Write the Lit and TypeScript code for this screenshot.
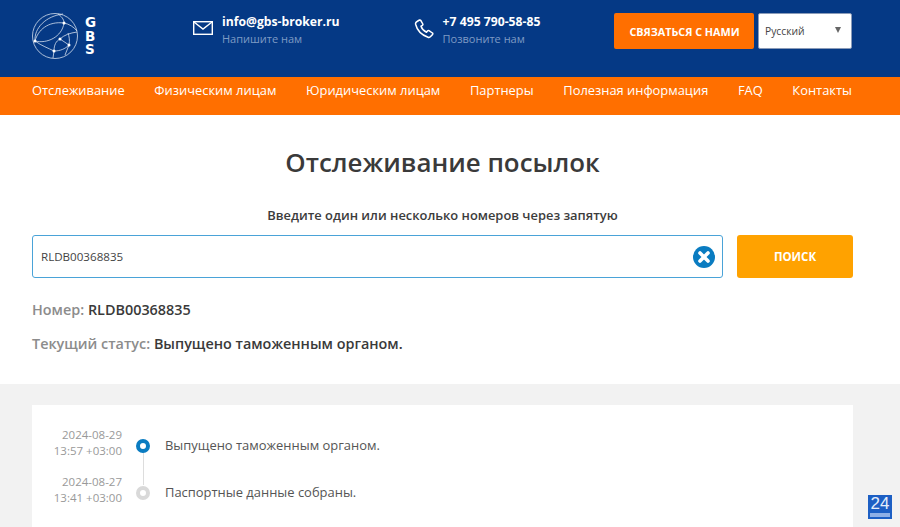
import { LitElement, html, css } from "lit";
import { customElement } from "lit/decorators.js";

@customElement("app-root")
export class AppRoot extends LitElement {
  static styles = css`
    :host { display: block; height: 527px; overflow: hidden; font-family: "Open Sans", sans-serif; color: #3c3c3c; background: #fff; position: relative; }
    .top { height: 77px; background: #053985; box-sizing: border-box; padding: 13px 48px 0 32px; display: flex; align-items: flex-start; }
    .logo { width: 47px; height: 48px; display: block; }
    .gbs { width: 19px; padding-left: 6px; box-sizing: border-box; margin-top: 3px; color: #fff; font-family: "DejaVu Sans", sans-serif; font-size: 13.5px; font-weight: 700; line-height: 13.5px; word-spacing: 10px; }
    .contact { display: flex; align-items: flex-start; color: #fff; }
    .mail { margin-left: 95px; }
    .phone { margin-left: 74.5px; }
    .contact svg { display: block; margin-top: 8px; margin-right: 9px; }
    .phone svg { margin-right: 8.5px; margin-top: 6px;}
    .c1 { font-size: 12.2px; font-weight: 700; line-height: 18px; }
    .c2 { font-size: 11px; line-height: 16px; color: #7e9bc4; margin-top: 0; }
    .contact-btn { margin-left: auto; width: 140px; height: 36px; background: #ff6f00; border-radius: 2px; color: #fff; font-size: 10.8px; font-weight: 700; display: flex; align-items: center; justify-content: center; margin-right: 4px; padding-left: 1px; box-sizing: border-box; }
    .lang { width: 94px; height: 36px; box-sizing: border-box; background: #fff; border: 1px solid #8a9bb8; border-radius: 2px; font-size: 10.3px; color: #444; display: flex; align-items: center; justify-content: space-between; padding: 0 10px 0 6px; }
    .arrow { width: 0; height: 0; border-left: 3.5px solid transparent; border-right: 3.5px solid transparent; border-top: 6px solid #666; margin-top: -2px; }
    nav { height: 38px; background: #ff6f00; display: flex; justify-content: space-between; align-items: center; padding: 0 48px 12px 32px; box-sizing: border-box; color: #fff; font-size: 12.9px; }
    .main { height: 269px; box-sizing: border-box; padding: 31px 47px 0 32px; }
    h1 { margin: 0; font-size: 25.9px; font-weight: 600; line-height: 32px; text-align: center; color: #3a3a3a; }
    .hint { margin-top: 27px; text-align: center; font-size: 12.9px; font-weight: 600; line-height: 20px; color: #3c3c3c; }
    .row { display: flex; margin-top: 10px; gap: 14px; }
    .input { flex: 1; height: 43px; box-sizing: border-box; border: 1px solid #4aa3d8; border-radius: 3px; display: flex; align-items: center; justify-content: space-between; padding: 0 6px 0 8px; font-size: 11.6px; color: #444; }
    .search { width: 116px; height: 43px; background: #ffa200; border-radius: 3px; color: #fff; font-size: 11.5px; font-weight: 700; display: flex; align-items: center; justify-content: center; }
    .line { font-size: 14.4px; font-weight: 600; line-height: 20px; color: #3a3a3a; }
    .line span { color: #8c8c8c; }
    .num { margin-top: 22px; }
    .status { margin-top: 14px; }
    .band { height: 143px; background: #f2f2f2; padding: 21px 47px 0 32px; box-sizing: border-box; position: relative; }
    .card { background: #fff; height: 122px; padding-top: 21px; box-sizing: border-box; }
    .ev { display: grid; grid-template-columns: 90px 43px 1fr; height: 47px; }
    .date { font-size: 11.5px; line-height: 16.5px; padding-top: 0.6px; color: #999; text-align: right; }
    .mark { position: relative; }
    .dot { position: absolute; left: 14px; top: 13px; width: 14px; height: 14px; box-sizing: border-box; border-radius: 50%; border: 4px solid #0a7cc1; background: #fff; }
    .dot.g { border-color: #d9d9d9; }
    .stem { position: absolute; left: 20.5px; top: 26px; width: 1px; height: 33px; background: #ddd; }
    .text { font-size: 12.95px; line-height: 18px; color: #555; padding-top: 10px; }
    .badge { position: absolute; left: 868px; top: 495px; width: 24px; height: 24px; background: #1d5fc4; color: #e6eefb; font: 17px/17px "Liberation Sans", sans-serif; text-align: center; box-sizing: border-box; overflow: hidden; }
    .badge i { display: block; height: 4px; margin: 1px 2px 0; background: #8fb0e6; }
  `;
  render() {
    return html`
      <div class="top">
        <svg class="logo" viewBox="0 0 47 48" fill="none" stroke="#d5dfee" stroke-width="0.8">
          <circle cx="23" cy="23" r="22.5" />
          <path d="M3 28 C2 15 14 3 31 1" />
          <path d="M3 28 C6 17 16 8 32 10" />
          <path d="M3 28 C15 31 30 24 32 10 C32 6 29 3 26 1" />
          <path d="M32 10 C37 11 42 14 45 18" />
          <path d="M3 28 C10 33 16 35 22 38 L21 45" />
          <path d="M22 38 C22 32 24 28 28 26 C32 22 38 20 45 19" />
          <path d="M22 38 C28 38 33 36 37 32 C38 27 37 23 36 20" />
          <path d="M28 26 L37 32 L33 42" />
          <g fill="#fff" stroke="none">
            <circle cx="32" cy="10" r="1.5" /><circle cx="3" cy="28" r="1.5" /><circle cx="28" cy="26" r="1.5" /><circle cx="37" cy="32" r="1.5" /><circle cx="22" cy="38" r="1.5" />
          </g>
        </svg>
        <div class="gbs">G B S</div>
        <div class="contact mail">
          <svg width="20" height="14" viewBox="0 0 20 14" fill="none" stroke="#fff" stroke-width="1.4"><rect x="0.7" y="0.7" width="18.6" height="12.6" /><path d="M1 1 L10 8 L19 1" /></svg>
          <div><div class="c1">info@gbs-broker.ru</div><div class="c2">Напишите нам</div></div>
        </div>
        <div class="contact phone">
          <svg width="20" height="20" viewBox="0 0 20 20" fill="none" stroke="#fff" stroke-width="1.5" stroke-linejoin="round"><path d="M3 2.5 L5.5 1 C6 .8 6.5 1 6.8 1.5 L8.8 5 C9 5.5 8.9 6 8.4 6.3 L7 7.2 C7.8 9.5 10 12 12.5 13.2 L13.6 11.8 C14 11.4 14.5 11.3 15 11.6 L18.4 14 C18.9 14.3 19 15 18.6 15.4 L16.6 17.6 C16 18.3 15 18.6 14 18.2 C8 16 3 11 1.6 5.2 C1.4 4 2 3 3 2.5 Z" /></svg>
          <div><div class="c1">+7 495 790-58-85</div><div class="c2">Позвоните нам</div></div>
        </div>
        <div class="contact-btn">СВЯЗАТЬСЯ С НАМИ</div>
        <div class="lang">Русский<span class="arrow"></span></div>
      </div>
      <nav>
        <span>Отслеживание</span><span>Физическим лицам</span><span>Юридическим лицам</span><span>Партнеры</span><span>Полезная информация</span><span>FAQ</span><span>Контакты</span>
      </nav>
      <div class="main">
        <h1>Отслеживание посылок</h1>
        <div class="hint">Введите один или несколько номеров через запятую</div>
        <div class="row">
          <div class="input">RLDB00368835
            <svg width="24" height="24" viewBox="0 0 24 24"><circle cx="12" cy="12" r="11" fill="#0a7cc1"/><path d="M8 8 L16 16 M16 8 L8 16" stroke="#fff" stroke-width="3.6" stroke-linecap="round"/></svg>
          </div>
          <div class="search">ПОИСК</div>
        </div>
        <div class="line num"><span>Номер:</span> RLDB00368835</div>
        <div class="line status"><span>Текущий статус:</span> Выпущено таможенным органом.</div>
      </div>
      <div class="band">
        <div class="card">
          <div class="ev"><div class="date">2024-08-29<br />13:57 +03:00</div><div class="mark"><div class="stem"></div><div class="dot"></div></div><div class="text">Выпущено таможенным органом.</div></div>
          <div class="ev"><div class="date">2024-08-27<br />13:41 +03:00</div><div class="mark"><div class="dot g"></div></div><div class="text">Паспортные данные собраны.</div></div>
        </div>
      </div>
      <div class="badge">24<i></i></div>
    `;
  }
}
